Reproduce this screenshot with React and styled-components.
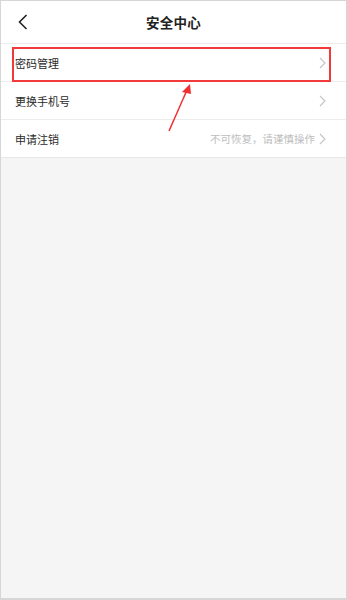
import React from 'react';
import styled, { createGlobalStyle } from 'styled-components';

const Global = createGlobalStyle`
  html, body { margin: 0; padding: 0; }
  body {
    font-family: "Noto Sans CJK SC", "Liberation Sans", sans-serif;
    background: #fff;
  }
`

const Frame = styled.div`
  position: relative;
  width: 347px;
  height: 600px;
  box-sizing: border-box;
  border: 1px solid #d6d6d6;
  border-bottom-width: 2px;
  background: #f5f5f5;
  display: flex;
  flex-direction: column;
  overflow: hidden;
`

const Header = styled.div`
  height: 42px;
  background: #fff;
  border-bottom: 1px solid #ececec;
  display: flex;
  align-items: center;
  justify-content: center;
  position: relative;
  flex-shrink: 0;
`

const Back = styled.div`
  position: absolute;
  left: 14px;
  top: 12px;
  width: 16px;
  height: 18px;
  display: flex;
  align-items: center;
  justify-content: center;
`

const Title = styled.h1`
  margin: 0;
  font-size: 13.5px;
  font-weight: 700;
  color: #222;
  letter-spacing: 0.2px;
`

const List = styled.div`
  background: #fff;
  display: flex;
  flex-direction: column;
`

const Row = styled.div`
  height: 37px;
  display: flex;
  align-items: center;
  padding: 0 20px 0 14px;
  border-bottom: 1px solid ${p => (p.last ? '#e8e8e8' : '#ececec')};
  position: relative;
`

const Label = styled.span`
  font-size: 11px;
  color: #2a2a2a;
  flex: 1;
`

const Hint = styled.span`
  font-size: 10.5px;
  color: #bdbdbd;
  margin-right: 4px;
`

const Highlight = styled.div`
  position: absolute;
  left: 11px;
  right: 15px;
  top: 3px;
  bottom: -1px;
  border: 2px solid #f23a3a;
  pointer-events: none;
`

const Arrow = styled.svg`
  position: absolute;
  left: 160px;
  top: 80px;
  overflow: visible;
`

const Chevron = () => (
  <svg width="7" height="12" viewBox="0 0 7 12">
    <path d="M1 1 L6 6 L1 11" fill="none" stroke="#c4c4c4" strokeWidth="1.1" />
  </svg>
)

const items = [
  { label: '密码管理', highlight: true },
  { label: '更换手机号' },
  { label: '申请注销', hint: '不可恢复，请谨慎操作', last: true },
]

export default function App() {
  return (
    <Frame>
      <Global />
      <Header>
        <Back>
          <svg width="10" height="16" viewBox="0 0 10 16">
            <path d="M8.5 1 L1.5 8 L8.5 15" fill="none" stroke="#222" strokeWidth="1.6" />
          </svg>
        </Back>
        <Title>安全中心</Title>
      </Header>
      <List>
        {items.map(it => (
          <Row key={it.label} last={it.last}>
            <Label>{it.label}</Label>
            {it.hint && <Hint>{it.hint}</Hint>}
            <Chevron />
            {it.highlight && <Highlight />}
          </Row>
        ))}
      </List>
      <Arrow width="40" height="60" viewBox="0 0 40 60">
        <line x1="8" y1="50" x2="26" y2="9" stroke="#f03030" strokeWidth="1.5" />
        <polygon points="29,3 21,11 30,13" fill="#f03030" />
      </Arrow>
    </Frame>
  );
}
